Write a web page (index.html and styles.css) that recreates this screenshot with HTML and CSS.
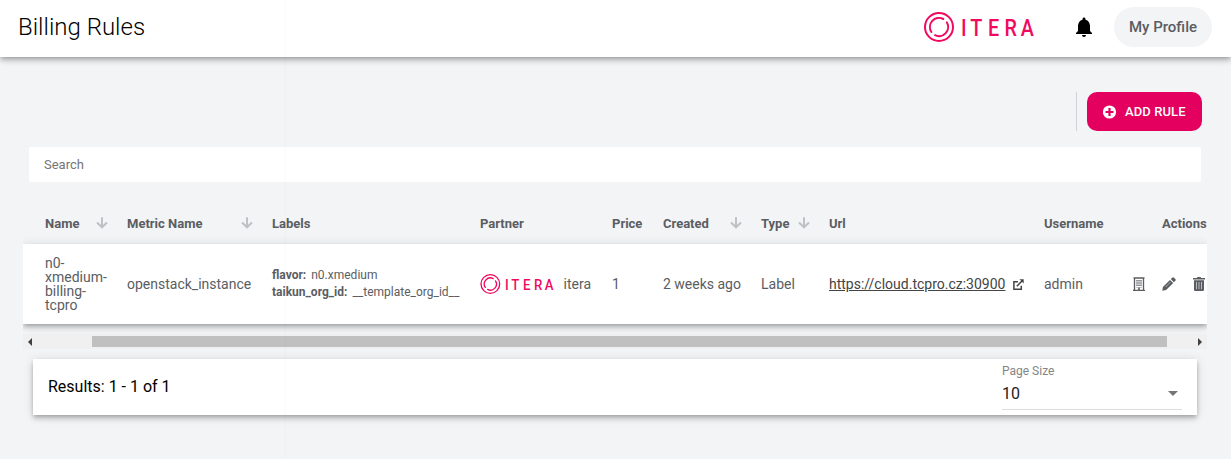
FILE: index.html
```html
<!DOCTYPE html>
<html lang="en">
<head>
<meta charset="utf-8">
<title>Billing Rules</title>
<link rel="stylesheet" href="styles.css">
</head>
<body>
<header class="topbar">
  <h1 class="title">Billing Rules</h1>
  <svg class="brand" width="110" height="30" viewBox="0 0 110 30">
    <g fill="none" stroke="#f1095f" stroke-width="2">
      <circle cx="15" cy="15" r="14"/>
      <path d="M19.300 7A9.100 9.100 0 0 0 7.400 20M22.800 10.300A9.100 9.100 0 0 1 11 23.200" stroke-linecap="round"/>
    </g>
    <text class="logo-text" transform="translate(0 24) scale(.86 1)" x="43 53.800 74.500 93.500 112.500" y="0">ITERA</text>
  </svg>
  <svg class="bell" width="24" height="24" viewBox="0 0 24 24"><path d="M12 22c1.100 0 2-.9 2-2h-4c0 1.100.89 2 2 2zm6-6v-5c0-3.070-1.640-5.640-4.500-6.320V4c0-.83-.67-1.500-1.500-1.500s-1.500.67-1.500 1.500v.68C7.630 5.360 6 7.920 6 11v5l-2 2v1h16v-1l-2-2z"/></svg>
  <button class="profile">My Profile</button>
</header>
<main class="content">
  <div class="toolbar">
    <button class="add">
      <svg width="14" height="14" viewBox="0 0 14 14"><circle cx="6.500" cy="7" r="6.600" fill="#fff"/><path d="M6.500 3v8M2.500 7h8" stroke="#e4005f" stroke-width="2.200"/></svg>
      <span>ADD RULE</span>
    </button>
  </div>
  <input class="search" placeholder="Search">
  <section class="table">
    <div class="row head">
      <div class="sort">Name <svg class="arrow" width="12" height="12" viewBox="0 0 12 12"><path d="M6 .3V10M1 5.500L6 10.300L11 5.500"/></svg></div>
      <div class="sort">Metric Name <svg class="arrow" width="12" height="12" viewBox="0 0 12 12"><path d="M6 .3V10M1 5.500L6 10.300L11 5.500"/></svg></div>
      <div>Labels</div>
      <div>Partner</div>
      <div>Price</div>
      <div class="sort">Created <svg class="arrow" width="12" height="12" viewBox="0 0 12 12"><path d="M6 .3V10M1 5.500L6 10.300L11 5.500"/></svg></div>
      <div class="sort">Type <svg class="arrow" width="12" height="12" viewBox="0 0 12 12"><path d="M6 .3V10M1 5.500L6 10.300L11 5.500"/></svg></div>
      <div>Url</div>
      <div>Username</div>
      <div class="actions-head">Actions</div>
    </div>
    <div class="row item">
      <div class="name">n0-<br>xmedium-<br>billing-<br>tcpro</div>
      <div>openstack_instance</div>
      <div class="labels"><div><b>flavor:</b>n0.xmedium</div><div><b>taikun_org_id:</b>__template_org_id__</div></div>
      <div class="partner">
        <svg width="74" height="20" viewBox="0 0 110 30">
          <g fill="none" stroke="#f1095f" stroke-width="2">
            <circle cx="15" cy="15" r="14"/>
            <path d="M19.300 7A9.100 9.100 0 0 0 7.400 20M22.800 10.300A9.100 9.100 0 0 1 11 23.200" stroke-linecap="round"/>
          </g>
          <text class="logo-text" transform="translate(0 24) scale(.86 1)" x="43 53.800 74.500 93.500 112.500" y="0">ITERA</text>
        </svg>itera</div>
      <div>1</div>
      <div>2 weeks ago</div>
      <div>Label</div>
      <div class="url"><a>https://cloud.tcpro.cz:30900</a>
        <svg width="11" height="11" viewBox="0 0 11 11"><path d="M5 2.700H.9V10.200H8.300V6.800M3.800 7.200L9 2" fill="none" stroke="#444" stroke-width="1.500"/><path d="M6.500.3H10.700V4.500Z" fill="#444"/></svg>
      </div>
      <div>admin</div>
      <div class="actions">
        <svg width="12" height="14" viewBox="0 0 12 14" fill="none" stroke="#5a5d62"><path d="M1.500 13V1M10.500 1V13M0 13.400H12M.5 1H11.500" stroke-width="1.300"/><path d="M4 3v7.500M6 3v7.500M8 3v7.500" stroke-width="1.300" stroke-dasharray="1.500 .8"/><path d="M6 10.500V13" stroke-width="1.600"/></svg>
        <svg width="14" height="14" viewBox="0 0 14 14" fill="#5a5d62"><path d="M.3 13.700L.9 10L8 2.900L11.200 6.100L4.100 13.100ZM8.800 2.100L10.200.7Q11.100-.2 12 .7L13.300 2Q14.200 2.900 13.300 3.800L11.900 5.200Z"/><path d="M3.600 10L8.400 5.200" stroke="#fff" stroke-width=".5"/></svg>
        <svg width="12" height="14" viewBox="0 0 12 14"><path d="M0 1H3.800L4.500 0H7.500L8.200 1H12V2.600H0ZM1 3.300H11V12.700Q11 14 9.700 14H2.300Q1 14 1 12.700Z" fill="#5a5d62"/><path d="M3.500 5V12.200M6 5V12.200M8.500 5V12.200" stroke="#c5c7ca" stroke-width=".9"/></svg>
      </div>
    </div>
    <div class="scrollbar">
      <svg width="5" height="8" viewBox="0 0 5 8"><path d="M4 0V8L0 4Z" fill="#404040"/></svg>
      <div class="thumb"></div>
      <svg width="5" height="8" viewBox="0 0 5 8"><path d="M1 0V8L5 4Z" fill="#404040"/></svg>
    </div>
  </section>
  <footer class="pager">
    <span>Results: 1 - 1 of 1</span>
    <div class="size">
      <label>Page Size</label>
      <div class="select">10 <svg width="10" height="5" viewBox="0 0 10 5"><path d="M0 0H10L5 5Z" fill="#757575"/></svg></div>
    </div>
  </footer>
</main>
<div class="edge"></div>
</body>
</html>
```
FILE: styles.css
```css
* { box-sizing: border-box; }
body { margin: 0; height: 459px; overflow: hidden; background: #f3f4f6; color: #5a5d62; font: 14px/14px Roboto, sans-serif; }
svg { display: block; flex: none; }
button { border: 0; font-family: inherit; }
.logo-text { font: 500 23px Roboto, sans-serif; fill: #f1095f; }
.arrow path { fill: none; stroke: #bfc1c4; stroke-width: 2; }
.topbar, .item, .pager { box-shadow: 0 2px 4px -1px rgba(0, 0, 0, .2), 0 4px 5px rgba(0, 0, 0, .14), 0 1px 10px rgba(0, 0, 0, .12); }
.topbar { position: relative; display: flex; align-items: center; height: 57px; padding: 0 19px 3px 18px; background: #fff; }
.title { margin: 0 auto 0 0; color: #000; font-size: 24px; font-weight: 300; line-height: 30px; }
.bell { margin: 0 18px 0 38px; }
.profile { width: 98px; height: 40px; padding: 0; border-radius: 20px; background: #f3f4f6; color: #5a5d62; font-size: 15px; font-weight: 500; }
.content { padding: 35px 24px 0 23px; }
.toolbar { display: flex; justify-content: flex-end; padding-right: 5px; }
.toolbar::before { content: ""; width: 1px; margin-right: 10px; background: #d0d2d5; }
.add { display: flex; align-items: center; gap: 8px; width: 115px; height: 39px; padding: 0 0 0 16px; border-radius: 10px; background: #e4005f; color: #fff; font-size: 13px; font-weight: 500; letter-spacing: .1px; }
.search { display: block; width: 1172px; height: 35px; margin: 16px 0 0 6px; padding: 0 15px; border: 0; border-radius: 2px; background: #fff; font: 13px Roboto, sans-serif; }
.search::placeholder { color: #757575; }
.table { overflow: hidden; }
.row { display: grid; grid-template-columns: 82px 145px 208px 132px 51px 98px 68px 215px 89px 1fr; align-items: center; padding-left: 22px; white-space: nowrap; }
.head { height: 62px; padding-top: 22px; font-size: 13px; font-weight: 700; }
.sort { display: flex; justify-content: space-between; padding-right: 19px; }
.actions-head { padding-left: 29px; }
.item { position: relative; height: 80px; background: #fff; }
.labels { font-size: 12px; line-height: 17px; }
.labels b { margin-right: 5px; font-weight: 700; }
.partner { display: flex; align-items: center; gap: 9.5px; }
.url { display: flex; align-items: center; gap: 8px; color: #444; }
.url a { text-decoration: underline; }
.actions { display: flex; align-items: center; gap: 17px; }
.scrollbar { display: flex; align-items: center; justify-content: space-between; height: 15px; margin-top: 10px; padding: 0 5px; background: #f0f0f0; }
.thumb { width: 1075px; height: 11px; margin: 0 auto 0 59px; background: #c0c0c0; }
.pager { display: flex; justify-content: space-between; height: 56px; margin: 10px 10px 0; padding: 0 15px; background: #fff; color: #000; font-size: 16px; line-height: 55px; }
.size { width: 180px; height: 51px; border-bottom: 1px solid #dedede; }
.size label { display: block; padding-top: 5px; color: #858585; font-size: 12px; line-height: 14px; }
.select { display: flex; align-items: center; justify-content: space-between; padding-right: 4px; line-height: 31px; color: #212121; }
.edge { position: absolute; top: 0; left: 285px; width: 1px; height: 459px; background: rgba(0, 0, 0, .015); }
```
